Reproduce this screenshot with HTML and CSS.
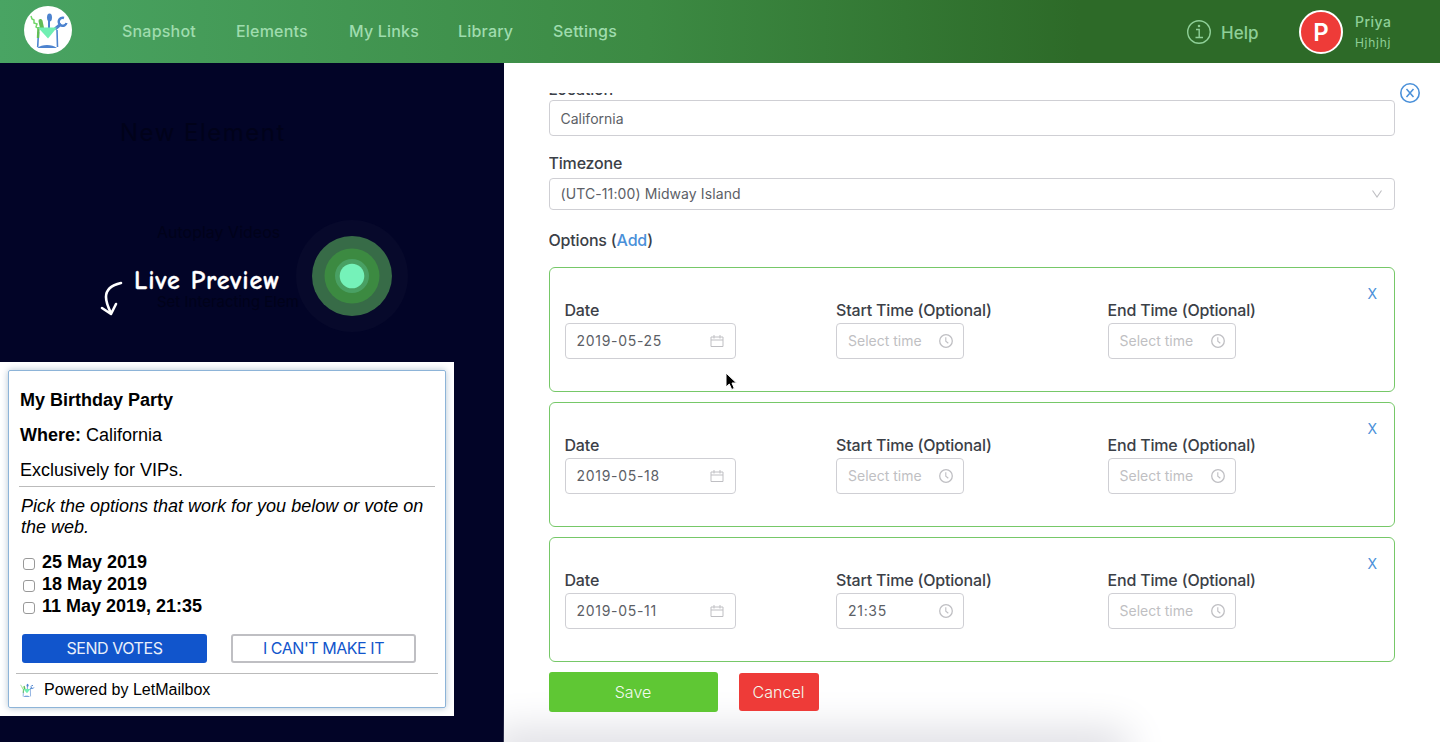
FILE: index.html
```html
<!DOCTYPE html>
<html lang="en">
<head>
    <meta charset="UTF-8">
    <meta name="viewport" content="width=device-width, initial-scale=1.0">
    <title>LetMailbox</title>
    <link rel="stylesheet" href="styles.css">
</head>
<body>
    <svg class="defs" width="0" height="0">
        <symbol id="logo" viewBox="0 0 48 48">
            <path d="M14.500 26l-.8 15M33 24l.5 17" stroke="#4c83cf" stroke-width="1.600"/>
            <path d="M14.500 21l-.5 11" stroke="#61bd55" stroke-width="2.400"/>
            <path d="M7 10l1 3 2 1v3l3 1-1 3 3 2" fill="none" stroke="#72d668" stroke-width="1.500"/>
            <path d="M18 22l-1.500-7" stroke="#61bd55" stroke-width="4" stroke-linecap="round"/>
            <path d="M25 22V12" stroke="#4c83cf" stroke-width="2"/>
            <ellipse cx="25.500" cy="11.500" rx="2.500" ry="4" fill="#4c83cf"/>
            <path d="M31 23l6-5" stroke="#4c83cf" stroke-width="3"/>
            <path d="M40 12a4 4 0 1 0 2.500 5" fill="none" stroke="#4c83cf" stroke-width="2.400"/>
            <path d="M14 21.500h19l-9 11z" fill="#70efb2"/>
            <path d="M13 42c5-4 15-4 20 0z" fill="#4c83cf"/>
        </symbol>
        <symbol id="calendar" viewBox="0 0 14 14">
            <path d="M1 3h12v9.500H1zM1 6h12M4 1v3.500M10 1v3.500" fill="none" stroke="#bfbfc3" stroke-width="1"/>
        </symbol>
        <symbol id="clock" viewBox="0 0 14 14">
            <circle cx="7" cy="7" r="6.300" fill="none" stroke="#bfbfc3" stroke-width="1.300"/>
            <path d="M6.800 3.300v4l2.500 2" fill="none" stroke="#bfbfc3" stroke-width="1.100"/>
        </symbol>
    </svg>

    <header class="topbar">
        <svg class="logo"><use href="#logo"/></svg>
        <nav class="menu">
            <a class="snapshot">Snapshot</a>
            <a class="elements">Elements</a>
            <a class="links">My Links</a>
            <a class="library">Library</a>
            <a class="settings">Settings</a>
        </nav>
        <div class="help">
            <svg width="26" height="26" viewBox="0 0 26 26" fill="none" stroke="#8ecf97" stroke-width="1.400">
                <circle cx="13" cy="12" r="11.300"/>
                <path d="M10 9.500h3.200v8M9.500 17.500h7.500"/>
                <circle cx="13" cy="6" r=".6"/>
            </svg>
            <span>Help</span>
        </div>
        <div class="avatar">P</div>
        <div class="user">
            <div class="first-name">Priya</div>
            <div class="last-name">Hjhjhj</div>
        </div>
    </header>

    <main class="content">
        <section class="preview">
            <div class="ghost ghost-title">New Element</div>
            <div class="ghost ghost-video">Autoplay Videos</div>
            <div class="ghost ghost-element">Set Interacting Elem</div>
            <div class="preview-head">
                <svg class="arrow" width="24" height="36" viewBox="0 0 24 36" fill="none" stroke="#fff" stroke-width="2.600" stroke-linecap="round" stroke-linejoin="round">
                    <path d="M21 2C12 4 6 8 6 16c0 6 2 10 5 16M2 27l9 6 5-10"/>
                </svg>
                <span class="preview-title">Live Preview</span>
                <svg class="pulse" width="112" height="112" viewBox="0 0 112 112">
                    <circle cx="56" cy="56" r="56" fill="#07092b"/>
                    <circle cx="56" cy="56" r="40" fill="#376b47"/>
                    <circle cx="56" cy="56" r="27.500" fill="#3c8a41"/>
                    <circle cx="56" cy="56" r="17" fill="#49a063"/>
                    <circle cx="56" cy="56" r="12.300" fill="#75f2b9"/>
                </svg>
            </div>

            <div class="mail">
                <div class="mail-card">
                    <p><b>My Birthday Party</b></p>
                    <p><b>Where:</b> California</p>
                    <p>Exclusively for VIPs.</p>
                    <hr>
                    <p class="hint">Pick the options that work for you below or vote on the web.</p>
                    <div class="votes">
                        <label><span class="box"></span>25 May 2019</label>
                        <label><span class="box"></span>18 May 2019</label>
                        <label><span class="box"></span>11 May 2019, 21:35</label>
                    </div>
                    <div class="mail-buttons">
                        <button class="send">SEND VOTES</button>
                        <button class="decline">I CAN'T MAKE IT</button>
                    </div>
                    <div class="powered">
                        <svg width="18" height="18"><use href="#logo"/></svg>
                        <span>Powered by LetMailbox</span>
                    </div>
                </div>
            </div>
        </section>

        <section class="editor">
            <svg class="close" width="20" height="20" viewBox="0 0 20 20" fill="none" stroke="#4a90d9">
                <circle cx="10" cy="10" r="9.200" stroke-width="1.600"/>
                <path d="M6.500 6l7 8M13.500 6l-7 8" stroke-width="1.500"/>
            </svg>
            <div class="form">
                <div class="label label-location">Location</div>
                <div class="input">California</div>
                <div class="label label-timezone">Timezone</div>
                <div class="input select">
                    <span>(UTC-11:00) Midway Island</span>
                    <svg width="12" height="10" viewBox="0 0 12 10" fill="none" stroke="#bfbfc3" stroke-width="1.100"><path d="M1.500 1.500L6 8l4.500-6.500"/></svg>
                </div>
                <div class="label label-options">Options (<a>Add</a>)</div>

                <div class="options">
                    <div class="option">
                        <div class="remove">X</div>
                        <div>
                            <div class="label">Date</div>
                            <div class="input date"><span>2019-05-25</span><svg><use href="#calendar"/></svg></div>
                        </div>
                        <div>
                            <div class="label">Start Time (Optional)</div>
                            <div class="input time empty"><span>Select time</span><svg><use href="#clock"/></svg></div>
                        </div>
                        <div>
                            <div class="label">End Time (Optional)</div>
                            <div class="input time empty"><span>Select time</span><svg><use href="#clock"/></svg></div>
                        </div>
                    </div>
                    <div class="option">
                        <div class="remove">X</div>
                        <div>
                            <div class="label">Date</div>
                            <div class="input date"><span>2019-05-18</span><svg><use href="#calendar"/></svg></div>
                        </div>
                        <div>
                            <div class="label">Start Time (Optional)</div>
                            <div class="input time empty"><span>Select time</span><svg><use href="#clock"/></svg></div>
                        </div>
                        <div>
                            <div class="label">End Time (Optional)</div>
                            <div class="input time empty"><span>Select time</span><svg><use href="#clock"/></svg></div>
                        </div>
                    </div>
                    <div class="option">
                        <div class="remove">X</div>
                        <div>
                            <div class="label">Date</div>
                            <div class="input date"><span>2019-05-11</span><svg><use href="#calendar"/></svg></div>
                        </div>
                        <div>
                            <div class="label">Start Time (Optional)</div>
                            <div class="input time"><span>21:35</span><svg><use href="#clock"/></svg></div>
                        </div>
                        <div>
                            <div class="label">End Time (Optional)</div>
                            <div class="input time empty"><span>Select time</span><svg><use href="#clock"/></svg></div>
                        </div>
                    </div>
                </div>

                <div class="actions">
                    <button class="save">Save</button>
                    <button class="cancel">Cancel</button>
                </div>
            </div>
        </section>
    </main>

    <svg class="cursor" width="13" height="19" viewBox="0 0 13 19">
        <path d="M1 1v14l3.300-3 2.400 5.500 2.600-1.100L7 11h4.500z" fill="#000" stroke="#fff" stroke-width="1"/>
    </svg>
</body>
</html>
```
FILE: styles.css
```css
* {
    box-sizing: border-box;
}
body {
    margin: 0;
    height: 742px;
    overflow: hidden;
    font-family: Inter, "Noto Sans", sans-serif;
    color: #3b4047;
    background-color: #fff;
}
.defs {
    position: absolute;
}
button {
    font-family: inherit;
    padding: 0;
    border: none;
    border-radius: 3px;
}

/* top bar */
.topbar {
    height: 63px;
    display: flex;
    align-items: center;
    padding-left: 24px;
    color: #9fdcae;
    background: linear-gradient(90deg, #49a463 0%, #3c8a43 45%, #2d6a28 75%, #2d6a28 100%);
}
.logo {
    width: 48px;
    height: 48px;
    margin-top: -4px;
    border-radius: 50%;
    background-color: #fff;
}
.menu {
    display: flex;
    gap: 40px;
    margin-left: 50px;
    padding-bottom: 2px;
    font-size: 16px;
    font-weight: 500;
    letter-spacing: 0.2px;
}
.menu a {
    white-space: nowrap;
}
.snapshot {
    width: 74px;
}
.elements {
    width: 73px;
}
.links {
    width: 69px;
}
.library {
    width: 55px;
}
.help {
    display: flex;
    align-items: center;
    gap: 9px;
    width: 113px;
    margin-left: auto;
    padding-top: 2px;
    color: #8ecf97;
    font-size: 17px;
    font-weight: 500;
}
.avatar {
    width: 44px;
    height: 44px;
    border: 2px solid #fff;
    border-radius: 50%;
    background-color: #ee3b38;
    color: #fff;
    font-size: 24px;
    font-weight: 600;
    line-height: 41px;
    text-align: center;
}
.user {
    width: 97px;
    padding-left: 12px;
    color: #8ecf97;
}
.first-name {
    font-size: 14px;
    font-weight: 500;
    letter-spacing: 0.5px;
    line-height: 22px;
}
.last-name {
    font-size: 12px;
    letter-spacing: 0.7px;
    line-height: 20px;
}

.content {
    display: flex;
    height: 679px;
}

/* live preview */
.preview {
    position: relative;
    width: 504px;
    background-color: #020427;
}
.ghost {
    position: absolute;
    color: #01021a;
    white-space: nowrap;
}
.ghost-title {
    left: 120px;
    top: 55px;
    font-size: 24px;
    letter-spacing: 1.5px;
}
.ghost-video {
    left: 157px;
    top: 159px;
    font-size: 16px;
}
.ghost-element {
    left: 157px;
    top: 229px;
    font-size: 15px;
}
.preview-head {
    position: relative;
    display: flex;
    align-items: flex-start;
    height: 299px;
    padding: 157px 0 0 100px;
}
.arrow {
    margin-top: 61px;
}
.preview-title {
    width: 162px;
    margin-top: 44px;
    padding-left: 10px;
    font-family: "Comic Neue", Lato, sans-serif;
    font-size: 26px;
    font-weight: bold;
    letter-spacing: 0.9px;
    line-height: 34px;
    white-space: nowrap;
    color: #fff;
    -webkit-text-stroke: 0.3px #fff;
}
.pulse {
    margin-left: 10px;
}
.mail {
    width: 454px;
    height: 354px;
    padding: 8px;
    background-color: #fff;
}
.mail-card {
    height: 338px;
    padding: 19px 8px 0;
    border: 1px solid #8db4d8;
    border-radius: 2px;
    box-shadow: 0 0 7px #b4c4d2;
    font-family: "Liberation Sans", Arial, sans-serif;
    font-size: 18px;
    color: #000;
}
.mail-card p {
    margin: 0 0 14px 3px;
    line-height: 21px;
}
.mail-card hr {
    height: 1px;
    margin: -9px 2px 9px;
    border: none;
    background-color: #bbb;
}
.mail-card .hint {
    margin: 0 0 13px 4px;
    font-style: italic;
}
.votes label {
    display: flex;
    align-items: center;
    gap: 7px;
    height: 22px;
    padding-left: 6px;
    font-weight: bold;
}
.box {
    width: 12px;
    height: 12px;
    margin-top: 4px;
    border: 1px solid #999;
    border-radius: 3px;
}
.mail-buttons {
    display: flex;
    gap: 24px;
    margin: 17px 0 10px 5px;
}
.mail-buttons button {
    width: 185px;
    height: 29px;
    padding-bottom: 2px;
    font-family: Inter, sans-serif;
    font-size: 16px;
    letter-spacing: -0.45px;
}
.send {
    background-color: #1155cc;
    color: #e9effa;
}
.mail-buttons .decline {
    border: 2px solid #bfbfc3;
    background-color: #fff;
    color: #1155cc;
}
.powered {
    display: flex;
    align-items: center;
    gap: 8px;
    height: 33px;
    margin-right: -1px;
    margin-left: -1px;
    padding-left: 2px;
    border-top: 1px solid #bbb;
    font-size: 16px;
}

/* element editor */
.editor {
    position: relative;
    flex: 1;
    padding: 30px 45px 0;
    background-color: #fff;
}
.editor::after {
    content: "";
    position: absolute;
    left: 0;
    right: 325px;
    bottom: -20px;
    height: 20px;
    box-shadow: 0 0 42px 12px #dcdce2;
    clip-path: inset(-100px -100px 0 0);
}
.form {
    position: relative;
    z-index: 1;
    height: 649px;
    overflow: hidden;
}
.close {
    position: absolute;
    top: 20px;
    right: 20px;
}
.label {
    font-size: 16px;
    font-weight: 500;
    letter-spacing: -0.18px;
    line-height: 24px;
    white-space: nowrap;
}
.label-location {
    margin: -16px 0 -1px;
}
.label-timezone {
    margin: 15px 0 3px;
}
.label-options {
    margin: 18px 0 15px;
}
.label a {
    color: #4a90d9;
}
.input {
    display: flex;
    align-items: center;
    justify-content: space-between;
    height: 36px;
    padding: 0 11px;
    border: 1px solid #cfcfd4;
    border-radius: 4px;
    background-color: #fff;
    font-size: 14px;
    color: #5c6066;
}
.input span {
    margin-top: -1px;
}
.input svg {
    width: 14px;
    height: 14px;
}
.select {
    height: 32px;
    letter-spacing: 0.1px;
}
.select svg {
    width: 12px;
    height: 10px;
}
.options {
    display: flex;
    flex-direction: column;
    gap: 10px;
}
.option {
    position: relative;
    display: grid;
    grid-template-columns: repeat(3, 271.5px);
    height: 125px;
    padding: 30px 15px 0;
    border: 1px solid #76c868;
    border-radius: 6px;
}
.option .label {
    margin-bottom: 1px;
}
.date {
    width: 171px;
    letter-spacing: 0.7px;
}
.time {
    width: 128px;
    padding-right: 10px;
}
.time:not(.empty) {
    letter-spacing: 0.7px;
}
.empty {
    color: #bfbfc3;
}
.remove {
    position: absolute;
    top: 16px;
    right: 17px;
    font-size: 14px;
    line-height: 20px;
    color: #4a90d9;
}
.actions {
    display: flex;
    align-items: center;
    gap: 21px;
    margin-top: 10px;
}
.actions button {
    font-size: 16px;
    font-weight: 300;
    color: #f3faef;
}
.save {
    width: 169px;
    height: 40px;
    background-color: #5fc734;
}
.cancel {
    width: 80px;
    height: 38px;
    background-color: #ee3b38;
}

.cursor {
    position: absolute;
    left: 725px;
    top: 372px;
    z-index: 2;
}
```
